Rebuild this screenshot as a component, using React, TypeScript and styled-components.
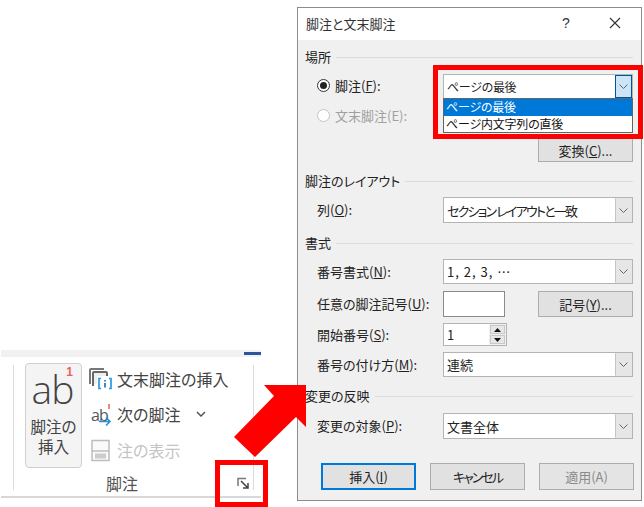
import React from "react";
import styled, { createGlobalStyle } from "styled-components";

const Global = createGlobalStyle`
  html, body { margin: 0; padding: 0; background: #fff; }
  body {
    width: 644px;
    height: 507px;
    overflow: hidden;
    font-family: "Noto Sans CJK JP", "Noto Sans", sans-serif;
    font-feature-settings: "palt";
  }
  u { text-underline-offset: 1px; }
`;

const Page = styled.div`
  position: relative;
  width: 644px;
  height: 507px;
  display: flex;
  align-items: flex-start;
`;

const LeftArea = styled.div`
  width: 297px;
  flex: none;
  padding-top: 350px;
`;

const Ribbon = styled.div`
  width: 260px;
  height: 148px;
  margin-left: 1px;
  box-sizing: border-box;
  border-bottom: 2px solid #d8d8d8;
  display: flex;
  flex-direction: column;
`;

const TabStrip = styled.div`
  height: 7px;
  background: #f1f1f1;
  display: flex;
  justify-content: flex-end;
  align-items: center;
  flex: none;
`;

const ActiveMark = styled.div`
  width: 17px;
  height: 3px;
  background: #2b579a;
`;

const Group = styled.div`
  position: relative;
  margin: 8px 7px 0 12px;
  height: 125px;
  border-left: 1px solid #dcdcdc;
  border-right: 1px solid #dcdcdc;
  box-sizing: border-box;
  display: flex;
  align-items: flex-start;
  padding: 0 0 0 11px;
  color: #444;
`;

const BigButton = styled.div`
  width: 57px;
  height: 105px;
  margin-top: -2px;
  box-sizing: border-box;
  border: 1px solid #cfcfcf;
  border-radius: 4px;
  background: #f4f4f4;
  display: flex;
  flex-direction: column;
  align-items: center;
  flex: none;
  position: relative;
`;

const BigGlyph = styled.div`
  font-family: "Open Sans", sans-serif;
  font-weight: 300;
  font-size: 39px;
  line-height: 30px;
  height: 30px;
  color: #444;
  margin-top: 10px;
  margin-left: -2px;
  letter-spacing: -1px;
`;

const BigSup = styled.span`
  position: absolute;
  top: 3px;
  right: 8px;
  font: 700 12px/10px "Liberation Sans", sans-serif;
  color: #f25c5c;
`;

const BigLabel = styled.div`
  font-size: 15.6px;
  line-height: 20px;
  text-align: center;
  margin-top: 12px;
  color: #444;
`;

const SmallColumn = styled.div`
  margin-left: 7px;
  padding-top: 1px;
  display: flex;
  flex-direction: column;
  gap: 10.5px;
`;

const SmallItem = styled.div<{ $off?: boolean }>`
  display: flex;
  align-items: center;
  height: 25px;
  gap: 5px;
  font-size: 16px;
  white-space: nowrap;
  color: ${(p) => (p.$off ? "#c4c4c4" : "#444")};
`;

const IconBox = styled.span`
  width: 23px;
  height: 25px;
  margin-top: 2px;
  flex: none;
  display: flex;
  align-items: center;
  justify-content: center;
`;

const Chevron = styled.svg`
  margin-left: 11px;
`;

const GroupName = styled.div`
  position: absolute;
  left: 0;
  right: 23px;
  bottom: -4px;
  text-align: center;
  font-size: 16px;
  line-height: 22px;
  color: #555;
`;

const Launcher = styled.svg`
  position: absolute;
  right: 3px;
  bottom: 0;
`;

const Dialog = styled.div`
  width: 345px;
  height: 494px;
  flex: none;
  margin-top: 7px;
  box-sizing: border-box;
  border: 1px solid #8c8c8c;
  background: #f0f0f0;
  color: #222;
  font-size: 13px;
  display: flex;
  flex-direction: column;
  position: relative;
`;

const TitleBar = styled.div`
  height: 32px;
  flex: none;
  background: #fff;
  display: flex;
  align-items: center;
  padding: 0 0 2px 8px;
  box-sizing: border-box;
  color: #333;
`;

const TitleText = styled.span`
  flex: 1;
`;

const HelpMark = styled.span`
  width: 16px;
  margin-right: 35px;
  text-align: center;
  font: 400 14px "Liberation Sans", sans-serif;
`;

const CloseIcon = styled.svg`
  margin-right: 20px;
`;

const Body = styled.div`
  flex: 1;
  padding: 9px 8px 0 7px;
  display: flex;
  flex-direction: column;
`;

const Legend = styled.div<{ $top?: number }>`
  height: 16px;
  line-height: 16px;
  margin-top: ${(p) => p.$top ?? 0}px;
  display: flex;
  align-items: center;
  gap: 5px;
  white-space: nowrap;
  &::after {
    content: "";
    flex: 1;
    height: 1px;
    background: #dcdcdc;
  }
`;

const Row = styled.div<{ $top: number; $h: number }>`
  height: ${(p) => p.$h}px;
  margin-top: ${(p) => p.$top}px;
  padding-left: 12px;
  display: grid;
  grid-template-columns: 126px 1fr;
  align-items: center;
  flex: none;
  position: relative;
`;

const FieldLabel = styled.div`
  white-space: nowrap;
  margin-top: -1px;
  color: #222;
`;

const RadioLabel = styled.label<{ $off?: boolean }>`
  display: flex;
  align-items: center;
  gap: 5px;
  white-space: nowrap;
  margin-top: -2px;
  color: ${(p) => (p.$off ? "#a0a0a0" : "#222")};
`;

const RadioMark = styled.span<{ $off?: boolean }>`
  width: 13px;
  height: 13px;
  box-sizing: border-box;
  border-radius: 50%;
  border: 1px solid ${(p) => (p.$off ? "#c4c4c4" : "#333")};
  background: #fff;
  display: flex;
  align-items: center;
  justify-content: center;
  &::after {
    content: "";
    width: 7px;
    height: 7px;
    border-radius: 50%;
    background: ${(p) => (p.$off ? "transparent" : "#222")};
  }
`;

const Combo = styled.div`
  height: 100%;
  box-sizing: border-box;
  border: 1px solid #b4b4b4;
  background: #fff;
  display: flex;
  align-items: center;
  padding-left: 3px;
`;

const ComboText = styled.span<{ $track?: number; $size?: number }>`
  flex: 1;
  white-space: nowrap;
  font-size: ${(p) => p.$size ?? 13}px;
  letter-spacing: ${(p) => p.$track ?? 0}px;
`;

const ComboArrow = styled.span<{ $hot?: boolean }>`
  width: 17px;
  align-self: stretch;
  box-sizing: border-box;
  flex: none;
  display: flex;
  align-items: center;
  justify-content: center;
  background: ${(p) => (p.$hot ? "#cce4f7" : "#e6e6e6")};
  border: 1px solid ${(p) => (p.$hot ? "#005499" : "transparent")};
  border-left-color: ${(p) => (p.$hot ? "#005499" : "#c4c4c4")};
`;

const DropList = styled.div`
  position: absolute;
  left: 138px;
  right: 0;
  top: 24px;
  z-index: 2;
  box-sizing: border-box;
  height: 35px;
  border: 1px solid #646464;
  background: #fff;
  font-size: 12px;
  letter-spacing: -0.2px;
`;

const DropItem = styled.div<{ $active?: boolean }>`
  height: 16.5px;
  line-height: 16px;
  padding-left: 2px;
  white-space: nowrap;
  background: ${(p) => (p.$active ? "#0078d7" : "transparent")};
  color: ${(p) => (p.$active ? "#fff" : "#111")};
`;

const RightButtonRow = styled.div<{ $top: number }>`
  margin-top: ${(p) => p.$top}px;
  display: flex;
  justify-content: flex-end;
`;

const PushButton = styled.div<{ $primary?: boolean; $off?: boolean; $h?: number }>`
  width: 95px;
  height: ${(p) => p.$h ?? 24}px;
  box-sizing: border-box;
  border: ${(p) => (p.$primary ? "2px solid #0078d7" : "1px solid #adadad")};
  background: ${(p) => (p.$off ? "#e4e4e4" : "#e1e1e1")};
  color: ${(p) => (p.$off ? "#8a8a8a" : "#222")};
  display: flex;
  align-items: center;
  justify-content: center;
  white-space: nowrap;
  flex: none;
`;

const CompactLabel = styled.span`
  letter-spacing: -2px;
`;

const SplitControls = styled.div`
  display: flex;
  justify-content: space-between;
  align-items: center;
  height: 100%;
`;

const SymbolInput = styled.div`
  width: 62px;
  height: 100%;
  box-sizing: border-box;
  border: 1px solid #8a8a8a;
  background: #fff;
`;

const Spinner = styled.div`
  width: 64px;
  height: 100%;
  box-sizing: border-box;
  border: 1px solid #b4b4b4;
  background: #fff;
  display: flex;
  align-items: center;
  padding-left: 3px;
`;

const SpinValue = styled.span`
  flex: 1;
`;

const SpinButtons = styled.div`
  width: 17px;
  align-self: stretch;
  display: flex;
  flex-direction: column;
  gap: 1px;
  padding: 1px;
  background: #f0f0f0;
  box-sizing: border-box;
`;

const SpinStep = styled.span`
  flex: 1;
  background: #e6e6e6;
  border: 1px solid #c8c8c8;
  display: flex;
  align-items: center;
  justify-content: center;
`;

const Footer = styled.div`
  margin-top: 24px;
  padding-left: 16px;
  display: flex;
  gap: 14px;
`;

const Overlay = styled.div<{ $x: number; $y: number; $w: number; $h: number }>`
  position: absolute;
  left: ${(p) => p.$x}px;
  top: ${(p) => p.$y}px;
  width: ${(p) => p.$w}px;
  height: ${(p) => p.$h}px;
  box-sizing: border-box;
  border: 5px solid #f00;
  z-index: 5;
`;

const ArrowOverlay = styled.svg`
  position: absolute;
  left: 0;
  top: 0;
  z-index: 5;
`;

const Down = () => (
  <svg width="9" height="5" viewBox="0 0 9 5">
    <path d="M.5.5l4 4 4-4" fill="none" stroke="#666" />
  </svg>
);

const ComboField = ({ text, hot, track, size }: { text: string; hot?: boolean; track?: number; size?: number }) => (
  <Combo>
    <ComboText $track={track} $size={size}>{text}</ComboText>
    <ComboArrow $hot={hot}>
      <Down />
    </ComboArrow>
  </Combo>
);

const EndnoteIcon = () => (
  <svg width="23" height="23" viewBox="0 0 23 23">
    <path d="M1 16V2q0-1 1-1h13" fill="none" stroke="#777" strokeWidth="2" />
    <path d="M4 18V5q0-1 1-1h12q1 0 1 1v3" fill="#eee" stroke="#666" strokeWidth="2" />
    <rect x="8" y="8" width="15" height="15" fill="#fff" />
    <path d="M12 10.500h-2v10h2M20 10.500h2v10h-2" fill="none" stroke="#2b9ae0" strokeWidth="1.700" />
    <path d="M16 12v1.500M16 15v4.500" stroke="#2b7cc0" strokeWidth="1.800" />
  </svg>
);

const NextIcon = () => (
  <svg width="23" height="23" viewBox="0 0 23 23">
    <text x="2" y="17" fontFamily="Open Sans, sans-serif" fontSize="16" letterSpacing="-1" fill="#555">ab</text>
    <path d="M20 0v5" stroke="#f25c5c" strokeWidth="1.500" />
    <path d="M10 17.500h11M17 13.500l4 4-4 4" fill="none" stroke="#2b8fd8" strokeWidth="1.600" />
  </svg>
);

const ShowIcon = () => (
  <svg width="20" height="23" viewBox="0 0 20 23">
    <rect x="1" y="1.500" width="17" height="20" fill="#fafafa" stroke="#bdbdbd" strokeWidth="1.500" />
    <path d="M1 12h17" stroke="#bdbdbd" strokeWidth="1.500" />
    <rect x="4" y="14.500" width="11" height="5" fill="#ccc" />
  </svg>
);

export default function App() {
  return (
    <Page>
      <Global />
      <LeftArea>
        <Ribbon>
          <TabStrip>
            <ActiveMark />
          </TabStrip>
          <Group>
            <BigButton>
              <BigGlyph>ab</BigGlyph>
              <BigSup>1</BigSup>
              <BigLabel>
                脚注の
                <br />
                挿入
              </BigLabel>
            </BigButton>
            <SmallColumn>
              <SmallItem>
                <IconBox><EndnoteIcon /></IconBox>
                文末脚注の挿入
              </SmallItem>
              <SmallItem>
                <IconBox><NextIcon /></IconBox>
                次の脚注
                <Chevron width="10" height="6" viewBox="0 0 10 6">
                  <path d="M1 1l4 4 4-4" fill="none" stroke="#555" strokeWidth="1.500" />
                </Chevron>
              </SmallItem>
              <SmallItem $off>
                <IconBox><ShowIcon /></IconBox>
                注の表示
              </SmallItem>
            </SmallColumn>
            <GroupName>脚注</GroupName>
            <Launcher width="13" height="13" viewBox="0 0 13 13">
              <path d="M1 9V1.500h8" fill="none" stroke="#777" strokeWidth="1.500" />
              <path d="M4 4l7 7M11 6v5H6" fill="none" stroke="#444" strokeWidth="1.500" />
            </Launcher>
          </Group>
        </Ribbon>
      </LeftArea>
      <Dialog>
        <TitleBar>
          <TitleText>脚注と文末脚注</TitleText>
          <HelpMark>?</HelpMark>
          <CloseIcon width="12" height="12" viewBox="0 0 12 12">
            <path d="M1 1l10 10M11 1L1 11" fill="none" stroke="#333" strokeWidth="1.100" />
          </CloseIcon>
        </TitleBar>
        <Body>
          <Legend>場所</Legend>
          <Row $top={9} $h={25}>
            <RadioLabel>
              <RadioMark />
              <span>脚注(<u>F</u>):</span>
            </RadioLabel>
            <ComboField text="ページの最後" hot size={12} track={-0.3} />
            <DropList>
              <DropItem $active>ページの最後</DropItem>
              <DropItem>ページ内文字列の直後</DropItem>
            </DropList>
          </Row>
          <Row $top={5} $h={25}>
            <RadioLabel $off>
              <RadioMark $off />
              <span>文末脚注(E):</span>
            </RadioLabel>
          </Row>
          <RightButtonRow $top={9}>
            <PushButton>変換(<u>C</u>)...</PushButton>
          </RightButtonRow>
          <Legend $top={11}>脚注のレイアウト</Legend>
          <Row $top={8} $h={26}>
            <FieldLabel>列(<u>O</u>):</FieldLabel>
            <ComboField text="セクション レイアウトと一致" track={-1.8} />
          </Row>
          <Legend $top={12}>書式</Legend>
          <Row $top={8} $h={25}>
            <FieldLabel>番号書式(<u>N</u>):</FieldLabel>
            <ComboField text="1, 2, 3, …" track={1} />
          </Row>
          <Row $top={7} $h={25}>
            <FieldLabel>任意の脚注記号(<u>U</u>):</FieldLabel>
            <SplitControls>
              <SymbolInput />
              <PushButton $h={26}>記号(<u>Y</u>)...</PushButton>
            </SplitControls>
          </Row>
          <Row $top={7} $h={23}>
            <FieldLabel>開始番号(<u>S</u>):</FieldLabel>
            <Spinner>
              <SpinValue>1</SpinValue>
              <SpinButtons>
                <SpinStep>
                  <svg width="7" height="4" viewBox="0 0 7 4"><path d="M3.500 0L7 4H0z" fill="#111" /></svg>
                </SpinStep>
                <SpinStep>
                  <svg width="7" height="4" viewBox="0 0 7 4"><path d="M0 0h7L3.500 4z" fill="#111" /></svg>
                </SpinStep>
              </SpinButtons>
            </Spinner>
          </Row>
          <Row $top={6} $h={25}>
            <FieldLabel>番号の付け方(<u>M</u>):</FieldLabel>
            <ComboField text="連続" />
          </Row>
          <Legend $top={11}>変更の反映</Legend>
          <Row $top={9} $h={26}>
            <FieldLabel>変更の対象(<u>P</u>):</FieldLabel>
            <ComboField text="文書全体" />
          </Row>
          <Footer>
            <PushButton $primary $h={27}>挿入(<u>I</u>)</PushButton>
            <PushButton $h={27}><CompactLabel>キャンセル</CompactLabel></PushButton>
            <PushButton $off $h={27}>適用(A)</PushButton>
          </Footer>
        </Body>
      </Dialog>
      <Overlay $x={433} $y={65} $w={210} $h={74} />
      <Overlay $x={215} $y={460} $w={53} $h={47} />
      <ArrowOverlay width="644" height="507" viewBox="0 0 644 507">
        <polygon points="264,385 306,385 306,427 296,417 255,457 234,437 274,396" fill="#f00" />
      </ArrowOverlay>
    </Page>
  );
}
